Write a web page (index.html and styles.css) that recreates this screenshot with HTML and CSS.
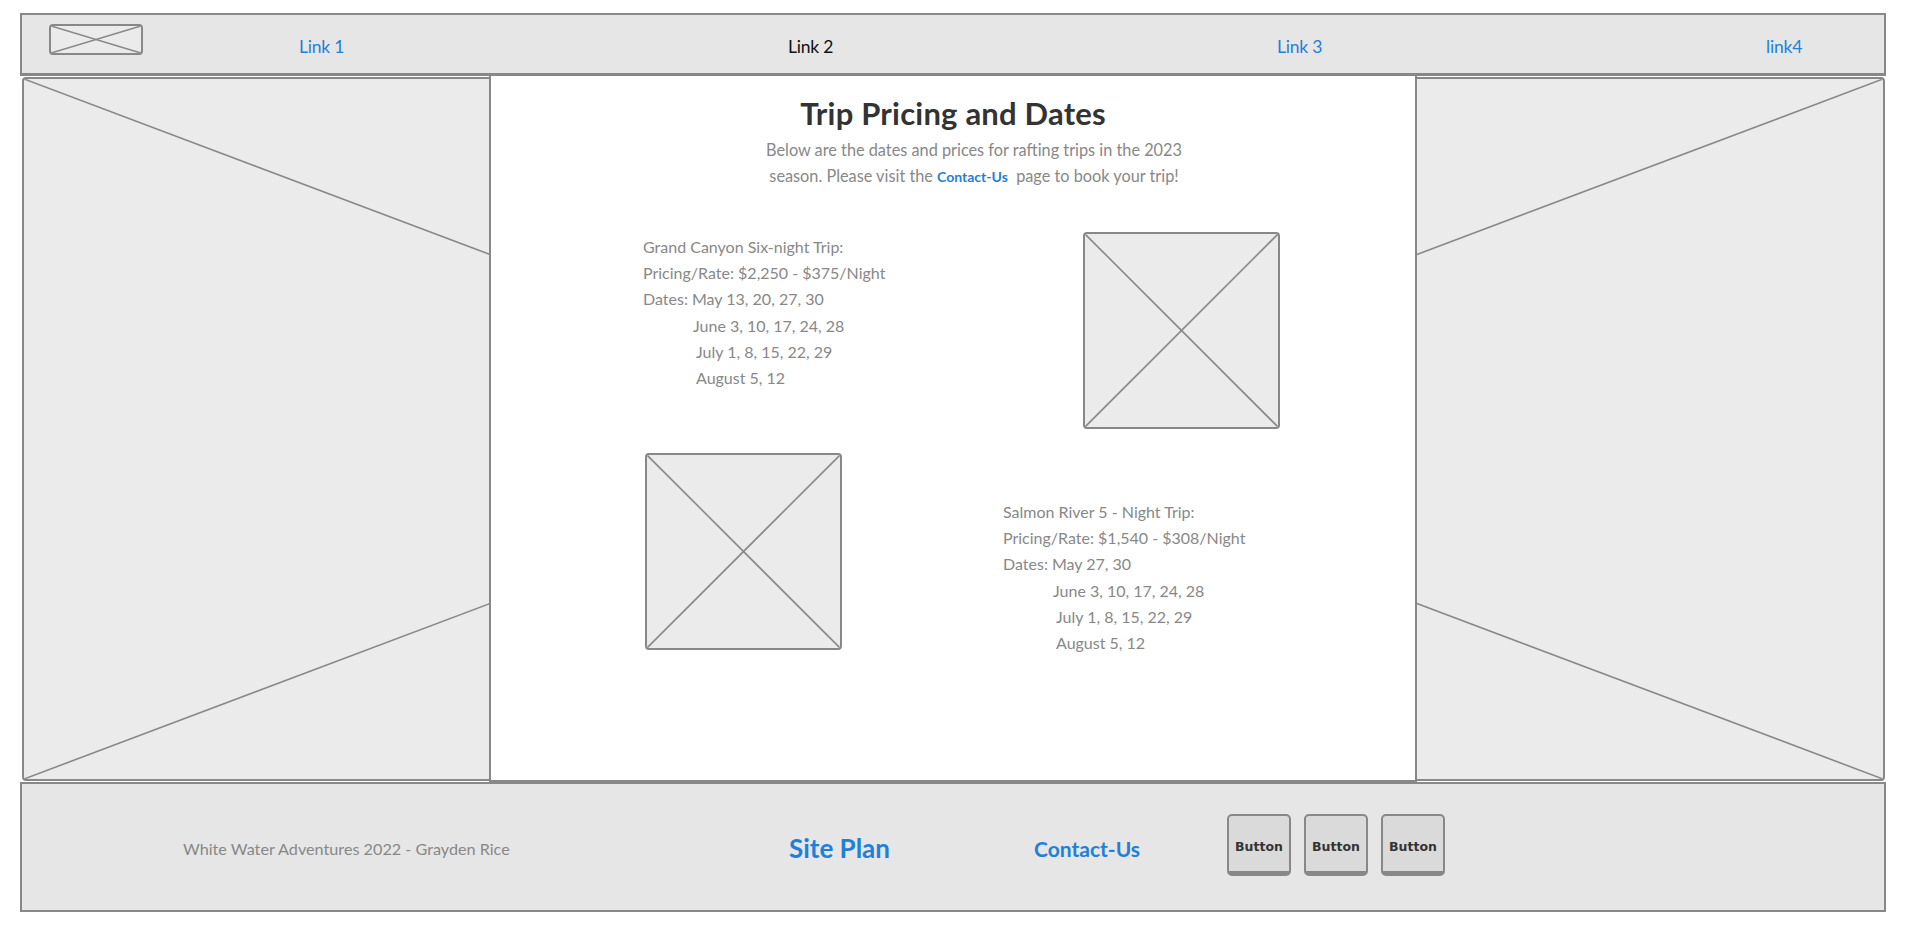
FILE: index.html
```html
<!DOCTYPE html>
<html lang="en">
<head>
<meta charset="utf-8">
<title>Trip Pricing and Dates</title>
<link rel="stylesheet" href="styles.css">
</head>
<body>
<div class="page">
  <header class="topbar">
    <div class="ph logo">
      <svg class="x" viewBox="0 0 100 100" preserveAspectRatio="none"><line x1="0" y1="0" x2="100" y2="100"/><line x1="100" y1="0" x2="0" y2="100"/></svg>
    </div>
    <nav class="nav">
      <a class="nav-link">Link 1</a>
      <a class="nav-link current">Link 2</a>
      <a class="nav-link">Link 3</a>
      <a class="nav-link">link4</a>
    </nav>
  </header>

  <main class="main">
    <div class="ph hero">
      <svg class="x" viewBox="0 0 100 100" preserveAspectRatio="none"><line x1="0" y1="0" x2="100" y2="100"/><line x1="100" y1="0" x2="0" y2="100"/></svg>
    </div>
    <section class="panel">
      <h1 class="title">Trip Pricing and Dates</h1>
      <p class="intro">Below are the dates and prices for rafting trips in the 2023<br>season. Please visit the <a class="inline-link">Contact-Us</a>&nbsp; page to book your trip!</p>

      <div class="trip-row first">
        <div class="trip-text">
          <div>Grand Canyon Six-night Trip:</div>
          <div>Pricing/Rate: $2,250 - $375/Night</div>
          <div>Dates: May 13, 20, 27, 30</div>
          <div class="in1">June 3, 10, 17, 24, 28</div>
          <div class="in2">July 1, 8, 15, 22, 29</div>
          <div class="in2">August 5, 12</div>
        </div>
        <div class="ph photo">
          <svg class="x" viewBox="0 0 100 100" preserveAspectRatio="none"><line x1="0" y1="0" x2="100" y2="100"/><line x1="100" y1="0" x2="0" y2="100"/></svg>
        </div>
      </div>

      <div class="trip-row second">
        <div class="ph photo">
          <svg class="x" viewBox="0 0 100 100" preserveAspectRatio="none"><line x1="0" y1="0" x2="100" y2="100"/><line x1="100" y1="0" x2="0" y2="100"/></svg>
        </div>
        <div class="trip-text">
          <div>Salmon River 5 - Night Trip:</div>
          <div>Pricing/Rate: $1,540 - $308/Night</div>
          <div>Dates: May 27, 30</div>
          <div class="in1">June 3, 10, 17, 24, 28</div>
          <div class="in2">July 1, 8, 15, 22, 29</div>
          <div class="in2">August 5, 12</div>
        </div>
      </div>
    </section>
  </main>

  <footer class="footer">
    <div class="slot copy">White Water Adventures 2022 - Grayden Rice</div>
    <div class="slot plan"><a class="foot-link big">Site Plan</a></div>
    <div class="slot contact"><a class="foot-link">Contact-Us</a></div>
    <div class="buttons">
      <button class="btn">Button</button>
      <button class="btn">Button</button>
      <button class="btn">Button</button>
    </div>
  </footer>
</div>
</body>
</html>
```

FILE: styles.css
```css
* { box-sizing: border-box; }

html, body {
  margin: 0;
  padding: 0;
  background: #ffffff;
}

body {
  font-family: Lato, "Open Sans", "Noto Sans", sans-serif;
  color: #888888;
}

.page {
  width: 1866px;
  margin: 13px 0 0 20px;
}

/* placeholders */
.ph {
  background: #ebebeb;
  border: 2px solid #888888;
  border-radius: 4px;
  overflow: hidden;
}
.x {
  display: block;
  width: 100%;
  height: 100%;
}
.x line {
  stroke: #888888;
  stroke-width: 1.6;
  vector-effect: non-scaling-stroke;
}

/* header */
.topbar {
  height: 63px;
  background: #e6e6e6;
  border: 2px solid #888888;
  border-bottom-width: 3px;
  display: flex;
  align-items: flex-start;
  padding-left: 27px;
}
.logo {
  width: 94px;
  height: 31px;
  margin-top: 9px;
  flex: none;
}
.nav {
  display: flex;
  margin-left: 156px;
  margin-top: 22px;
}
.nav-link {
  width: 489px;
  font-size: 17.5px;
  line-height: 20px;
  color: #1f80d9;
  text-decoration: none;
  letter-spacing: -0.2px;
}
.nav-link:last-child { width: auto; }
.nav-link.current { color: #111111; }

/* main */
.main {
  height: 706px;
  display: grid;
  grid-template-columns: 1fr;
  grid-template-rows: 1fr;
}
.hero {
  grid-area: 1 / 1;
  margin: 1px 1px 1px 2px;
}
.panel {
  grid-area: 1 / 1;
  justify-self: center;
  width: 928px;
  background: #ffffff;
  border-left: 2px solid #888888;
  border-right: 2px solid #888888;
  border-bottom: 2px solid #888888;
  padding-top: 19px;
}

.title {
  margin: 0;
  text-align: center;
  font-size: 31px;
  line-height: 37px;
  font-weight: 700;
  color: #333333;
  letter-spacing: 0.2px;
}
.intro {
  margin: 5px 0 0 0;
  padding-left: 42px;
  text-align: center;
  font-size: 16.3px;
  line-height: 26px;
  color: #888888;
  letter-spacing: 0;
}
.inline-link {
  color: #1f80d9;
  font-weight: 700;
  font-size: 14px;
}

.trip-row {
  display: flex;
  align-items: flex-start;
}
.trip-row.first {
  margin-top: 42px;
  padding-left: 152px;
}
.trip-row.first .trip-text {
  width: 440px;
  margin-top: 2px;
}
.trip-row.second {
  margin-top: 24px;
  padding-left: 154px;
}
.trip-row.second .trip-text {
  margin-left: 161px;
  margin-top: 46px;
}
.trip-text {
  font-size: 16px;
  line-height: 26.2px;
  color: #888888;
  letter-spacing: 0;
}
.in1 { padding-left: 50px; }
.in2 { padding-left: 53px; }

.photo {
  width: 197px;
  height: 197px;
  flex: none;
}

/* footer */
.footer {
  height: 130px;
  margin-top: 0;
  background: #e6e6e6;
  border: 2px solid #888888;
  display: flex;
  align-items: center;
  padding-left: 161px;
  padding-top: 2px;
}
.slot { flex: none; }
.copy {
  width: 606px;
  font-size: 16.2px;
  color: #888888;
  letter-spacing: 0;
}
.plan { width: 245px; }
.contact { width: 193px; }
.foot-link {
  color: #1f80d9;
  font-weight: 700;
  font-size: 21px;
  text-decoration: none;
}
.foot-link.big { font-size: 26px; }

.buttons {
  display: flex;
  gap: 13px;
  margin-top: -6px;
}
.btn {
  width: 64px;
  height: 62px;
  padding: 5px 0 0 0;
  background: #dadada;
  border: 2px solid #888888;
  border-bottom-width: 5px;
  border-radius: 5px;
  font-family: "DejaVu Sans", Verdana, sans-serif;
  font-weight: 700;
  font-size: 12.5px;
  color: #333333;
}
```
